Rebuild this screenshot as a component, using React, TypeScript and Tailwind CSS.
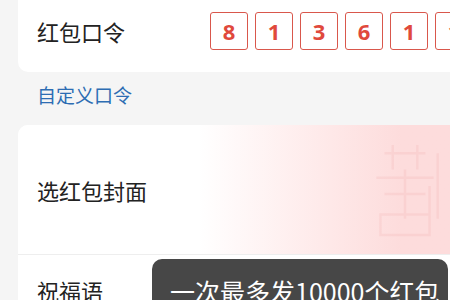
import React from 'react';

const code = ['8', '1', '3', '6', '1', '1'];

export default function App() {
  return (
    <div
      className="relative w-[450px] h-[300px] overflow-hidden bg-[#f5f5f5]"
      style={{ fontFamily: '"Noto Sans CJK SC", "Noto Sans", sans-serif' }}
    >
      {/* password card */}
      <div className="ml-[18px] mt-[-14px] w-[470px] h-[86px] bg-white rounded-[10px] flex items-center pl-[19px] pt-[4px]">
        <span className="block shrink-0 text-[22px] text-[#222] w-[173px] leading-none">红包口令</span>
        <div className="flex gap-[7px] shrink-0">
          {code.map((d, i) => (
            <div
              key={i}
              className="w-[38px] h-[38px] border-[1.5px] border-[#d9574c] rounded-[3px] flex items-center justify-center text-[#e0493c] text-[22px] font-bold"
              style={{ fontFamily: '"Noto Sans", sans-serif' }}
            >
              {d}
            </div>
          ))}
        </div>
      </div>

      <div className="pl-[37px] h-[53px] pt-[8px] text-[19px] text-[#2d6db3] leading-[30px]">自定义口令</div>

      {/* cover card */}
      <div className="ml-[18px] w-[450px] rounded-tl-[10px] overflow-hidden bg-white">
        <div className="relative h-[130px] flex items-center pl-[19px] bg-gradient-to-r from-white from-40% to-[#fddcdc] to-85% border-b border-[#eeeeee]">
          <svg className="absolute right-[18px] top-0 h-[130px] w-[90px] opacity-20" viewBox="0 0 110 130" fill="none" stroke="#f3a9a9" strokeWidth="3">
            <path d="M30 20 h50 M40 10 v30 M70 10 v30 M20 50 h70 M55 40 v60 M30 70 h50 M25 95 h60 v25 h-60 z M85 60 v50 M95 20 v80" />
          </svg>
          <span className="relative text-[22px] text-[#222] leading-none">选红包封面</span>
        </div>
        <div className="h-[60px] pl-[19px] pt-[24px] text-[22px] text-[#222] leading-none">祝福语</div>
      </div>

      {/* toast */}
      <div className="absolute left-[152px] top-[259px] w-[296px] h-[70px] bg-[#474747] rounded-[10px] pl-[18px] pt-[20px]">
        <span className="text-white text-[25px] leading-none whitespace-nowrap">一次最多发10000个红包</span>
      </div>
    </div>
  );
}
